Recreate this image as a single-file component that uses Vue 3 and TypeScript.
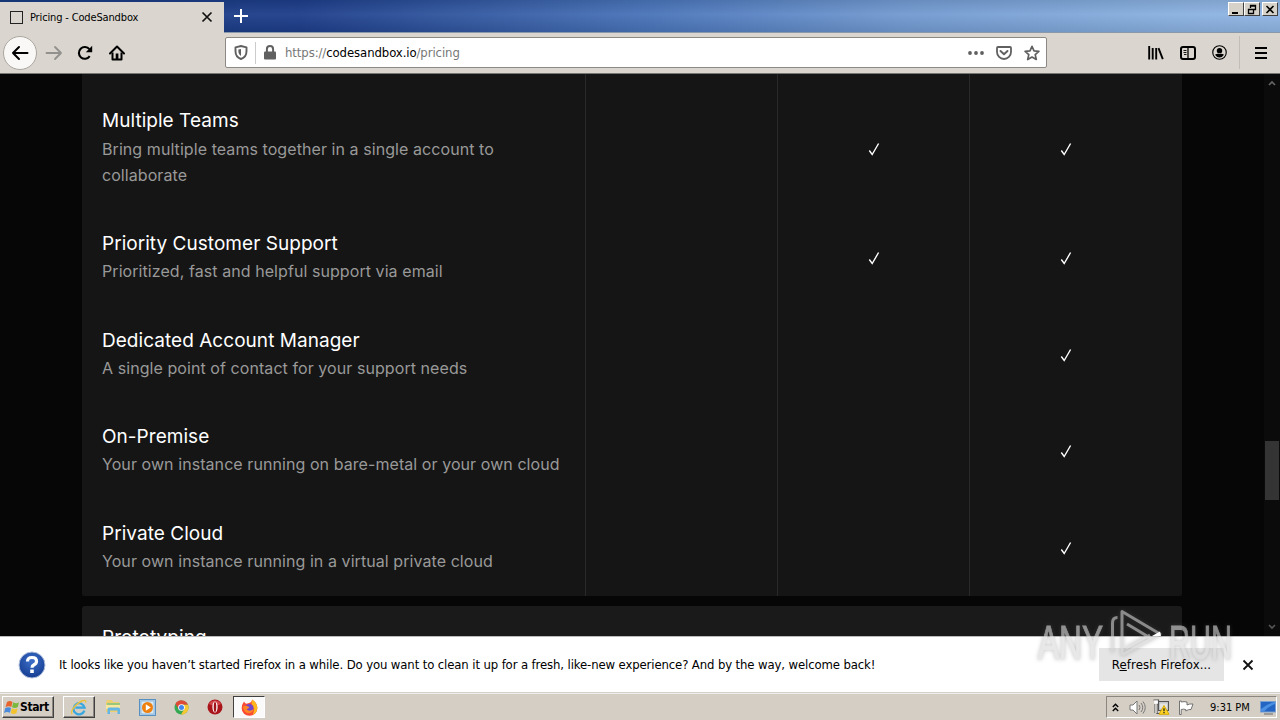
<script setup lang="ts">
interface Feature {
  title: string
  lines: string[]
  checks: boolean[]
}

const features: Feature[] = [
  {
    title: 'Multiple Teams',
    lines: ['Bring multiple teams together in a single account to', 'collaborate'],
    checks: [false, true, true],
  },
  {
    title: 'Priority Customer Support',
    lines: ['Prioritized, fast and helpful support via email'],
    checks: [false, true, true],
  },
  {
    title: 'Dedicated Account Manager',
    lines: ['A single point of contact for your support needs'],
    checks: [false, false, true],
  },
  {
    title: 'On-Premise',
    lines: ['Your own instance running on bare-metal or your own cloud'],
    checks: [false, false, true],
  },
  {
    title: 'Private Cloud',
    lines: ['Your own instance running in a virtual private cloud'],
    checks: [false, false, true],
  },
]
</script>

<template>
  <div class="screen">
    <header class="tabstrip">
      <div class="tab">
        <span class="favicon"></span>
        <span class="tab-title">Pricing - CodeSandbox</span>
        <svg class="tab-close" width="12" height="12" viewBox="0 0 12 12"><path d="M1.5 1.5l9 9M10.5 1.5l-9 9" stroke="#111" stroke-width="1.7" /></svg>
      </div>
      <svg class="newtab" width="16" height="16" viewBox="0 0 16 16"><path d="M8 1v14M1 8h14" stroke="#fff" stroke-width="2" /></svg>
      <div class="winbtns">
        <span class="winbtn"><svg width="12" height="11" viewBox="0 0 12 11"><path d="M2 9h6" stroke="#000" stroke-width="2" /></svg></span>
        <span class="winbtn"><svg width="12" height="11" viewBox="0 0 12 11"><path d="M4.5 4V1.5h5v4H8M4 2h6M2.5 5.500h5v4h-5zM2 5.500h6" fill="none" stroke="#000" stroke-width="1.3" /></svg></span>
        <span class="winbtn last"><svg width="12" height="11" viewBox="0 0 12 11"><path d="M2.500 2l7 7M9.500 2l-7 7" stroke="#000" stroke-width="1.6" /></svg></span>
      </div>
    </header>

    <nav class="toolbar">
      <div class="back"><svg width="18" height="16" viewBox="0 0 18 16"><path d="M16.500 8H2M8 2L2 8l6 6" fill="none" stroke="#000" stroke-width="2" stroke-linecap="round" stroke-linejoin="round" /></svg></div>
      <svg class="fwd" width="18" height="16" viewBox="0 0 18 16"><path d="M1.500 8H16M10 2l6 6-6 6" fill="none" stroke="#92918d" stroke-width="1.800" stroke-linecap="round" stroke-linejoin="round" /></svg>
      <svg class="reload" width="16" height="16" viewBox="0 0 16 16"><path d="M12.700 11.200A5.900 5.900 0 1 1 12.400 4.200" fill="none" stroke="#000" stroke-width="2.100" /><path d="M15.200 .8v6.400H8.800z" fill="#000" /></svg>
      <svg class="home" width="16" height="16" viewBox="0 0 16 16"><path d="M1 8.500L8 1.500l7 7" fill="none" stroke="#000" stroke-width="2" stroke-linecap="round" stroke-linejoin="round" /><path d="M3.500 7.500V14.500h9V7.500" fill="none" stroke="#000" stroke-width="2" stroke-linejoin="round" /><path d="M6.700 8.500h2.700V14H6.700z" fill="#000" /></svg>
      <div class="urlbar">
        <svg class="shield" width="14" height="15" viewBox="0 0 14 15"><path d="M7 1l5.500 1.300v4C12.500 10 10.500 12.800 7 14 3.500 12.800 1.500 10 1.500 6.300v-4z" fill="none" stroke="#606060" stroke-width="1.900" stroke-linejoin="round" /><path d="M7 4v7C5.300 10 4.400 8.500 4.400 6.300V4.500z" fill="#606060" /></svg>
        <span class="url-sep"></span>
        <svg class="lock" width="12" height="15" viewBox="0 0 12 15"><path d="M2.900 7V4.200a3.100 3.100 0 0 1 6.200 0V7" fill="none" stroke="#606060" stroke-width="2" /><rect x="0" y="6.500" width="12" height="8" rx="1" fill="#606060" /></svg>
        <span class="url">https://<b>codesandbox.io</b>/pricing</span>
        <svg class="dots" width="16" height="4" viewBox="0 0 16 4"><circle cx="2" cy="2" r="1.900" /><circle cx="8" cy="2" r="1.900" /><circle cx="14" cy="2" r="1.900" /></svg>
        <svg class="pocket" width="16" height="14" viewBox="0 0 16 14"><path d="M2 1h12q1 0 1 1v4a7 7 0 0 1-14 0V2q0-1 1-1z" fill="none" stroke="#606060" stroke-width="1.800" /><path d="M4.500 5L8 8.300 11.500 5" fill="none" stroke="#606060" stroke-width="1.900" stroke-linecap="round" stroke-linejoin="round" /></svg>
        <svg class="star" width="16" height="16" viewBox="0 0 16 16"><path d="M8 1.300l2 4.500 4.900.5-3.700 3.300 1.100 4.900L8 12l-4.300 2.500 1.100-4.900L1.100 6.300 6 5.800z" fill="none" stroke="#606060" stroke-width="1.700" stroke-linejoin="round" /></svg>
      </div>
      <svg class="library" width="16" height="16" viewBox="0 0 16 16"><path d="M1.200 1v13.500M4.700 3v11.500M8.200 3v11.500M10.500 3.200l4.300 11" stroke="#000" stroke-width="1.900" /></svg>
      <svg class="sidebar" width="16" height="14" viewBox="0 0 16 14"><rect x="1" y="1" width="14" height="12" rx="2" fill="none" stroke="#000" stroke-width="2" /><path d="M8 1v12" stroke="#000" stroke-width="1.300" /><path d="M3.500 4.500h3M3.500 6.500h3M4 8.500h2.500" stroke="#000" stroke-width=".9" /></svg>
      <svg class="account" width="15" height="15" viewBox="0 0 16 16"><circle cx="8" cy="8" r="7.200" fill="none" stroke="#000" stroke-width="1.200" /><circle cx="8" cy="6" r="2.900" /><path d="M3.200 10.300Q5.500 9 8 9.700 10.500 9 12.800 10.300 11 13.200 8 13.200T3.200 10.300z" /></svg>
      <span class="tool-sep"></span>
      <svg class="menu" width="12" height="12" viewBox="0 0 12 12"><path d="M0 1h12M0 6h12M0 11h12" stroke="#000" stroke-width="2" /></svg>
    </nav>

    <main class="page">
      <div class="content">
        <section class="table">
          <div class="row lead"><div class="cell info"></div><div class="cell"></div><div class="cell"></div><div class="cell"></div></div>
          <div v-for="f in features" :key="f.title" class="row">
            <div class="cell info">
              <h3>{{ f.title }}</h3>
              <p v-for="l in f.lines" :key="l">{{ l }}</p>
            </div>
            <div v-for="(c, i) in f.checks" :key="i" class="cell">
              <svg v-if="c" width="12" height="14" viewBox="0 0 12 14"><path d="M1.300 8.500L4.200 12.500 10.600 1.500" fill="none" stroke="#fff" stroke-width="1.400" /></svg>
            </div>
          </div>
        </section>
        <section class="next"><h3>Prototyping</h3></section>
      </div>
      <div class="scrollbar">
        <svg width="8" height="6" viewBox="0 0 8 6"><path d="M1 5l3-3 3 3" fill="none" stroke="#666" stroke-width="1.700" /></svg>
        <span class="thumb"></span>
        <svg class="down" width="8" height="6" viewBox="0 0 8 6"><path d="M1 1l3 3 3-3" fill="none" stroke="#555" stroke-width="1.700" /></svg>
      </div>
    </main>

    <aside class="notice">
      <svg class="help" width="28" height="28" viewBox="0 0 28 28">
        <defs><radialGradient id="hg" cx=".5" cy=".35" r=".65"><stop offset="0" stop-color="#3d70ca" /><stop offset="1" stop-color="#153d91" /></radialGradient></defs>
        <circle cx="14" cy="14" r="13" fill="url(#hg)" stroke="#aebddb" stroke-width="1" />
        <path d="M9.500 10.500Q9.500 6.500 14 6.500T18.500 10.200Q18.500 12.500 16 13.700 14 14.700 14 16.700" fill="none" stroke="#fff" stroke-width="3.200" /><rect x="12.200" y="18.500" width="3.600" height="3.500" fill="#fff" />
      </svg>
      <span class="msg">It looks like you haven’t started Firefox in a while. Do you want to clean it up for a fresh, like-new experience? And by the way, welcome back!</span>
      <button class="refresh">R<u>e</u>fresh Firefox...</button>
      <svg class="dismiss" width="12" height="12" viewBox="0 0 12 12"><path d="M1.500 1.500l9 9M10.500 1.500l-9 9" stroke="#111" stroke-width="1.800" /></svg>
    </aside>

    <footer class="taskbar">
      <div class="start">
        <svg width="16" height="15" viewBox="0 0 16 15"><path d="M3 2q3-2 5.500 0L7.300 7Q5 5.500 1.500 7z" fill="#e5652d" /><path d="M9.300 2.300q3 2 5.700 0L13.800 7Q11 9 8 7.300z" fill="#7bb83e" /><path d="M1.300 8Q4.500 6.500 7 8L6 12.800Q3 11 0 13z" fill="#4a8cdb" /><path d="M7.900 8.300q3 1.800 5.700 0l-1.200 5Q9.500 15 6.700 13z" fill="#f2c32f" /></svg>
        <b>Start</b>
      </div>
      <div class="task raised">
        <svg width="18" height="17" viewBox="0 0 20 18"><path d="M16 12.500A6.200 6.200 0 1 1 16.200 9.200H6" fill="none" stroke="#38a6df" stroke-width="2.500" /><path d="M2.500 16.500C-1 14 7 4 14 1.500q4-1.500 3.500 2" fill="none" stroke="#ebc23d" stroke-width="1.500" /></svg>
      </div>
      <div class="task">
        <svg width="17" height="16" viewBox="0 0 17 16"><path d="M1 3l1-2h5l1 2h6v10H1z" fill="#edcf72" /><path d="M2 4h13v3H2z" fill="#99c77e" /><path d="M1 6h14v4H1z" fill="#f9e7a0" /><path d="M2.500 15V10q0-1.500 1.500-1.500h9.500Q15 8.500 15 10v5h-2.500v-3.500H5V15z" fill="#64b6e4" /></svg>
      </div>
      <div class="task">
        <svg width="17" height="17" viewBox="0 0 17 17"><rect x=".5" y=".5" width="16" height="16" fill="#b8d4ec" stroke="#5790c0" /><rect x="2" y="2" width="13" height="13" fill="#d9e9f5" stroke="#79a9cf" stroke-width=".7" /><circle cx="8.500" cy="8.500" r="5.500" fill="#ee8010" /><path d="M6.800 5.300l5 3.200-5 3.200z" fill="#fff" /></svg>
      </div>
      <div class="task">
        <svg width="15" height="15" viewBox="0 0 15 15"><circle cx="7.500" cy="7.500" r="7" fill="#36a852" /><path d="M1.400 4A7 7 0 0 1 14 4.700H7.500L4.700 9z" fill="#df4937" /><path d="M14 4.700A7 7 0 0 1 7 14.500L10.300 9 7.500 4.700z" fill="#f5c732" /><circle cx="7.500" cy="7.500" r="3.300" fill="#fff" /><circle cx="7.500" cy="7.500" r="2.500" fill="#4385ef" /></svg>
      </div>
      <div class="task">
        <svg width="16" height="16" viewBox="0 0 16 16"><circle cx="8" cy="8" r="7.500" fill="#aa151b" /><path d="M2 5a7 7 0 0 1 12 0Q8 8 2 5z" fill="#d3484c" /><ellipse cx="8" cy="8" rx="2.600" ry="5.600" fill="#fff" /><ellipse cx="8" cy="8" rx="1.300" ry="5" fill="#a21219" /></svg>
      </div>
      <div class="task pressed">
        <svg width="17" height="17" viewBox="0 0 17 17"><path d="M8 4Q11 3 11 .5 16.500 4 16.300 9.500A7.800 7.300 0 0 1 .7 9.500Q.5 6 3 2.500q.7 2 2.500 2.200z" fill="#fb4a34" /><path d="M11 .5Q16.500 4 16.300 9.500 16 14 11.500 16 15 9 10.500 5z" fill="#ffb71c" /><circle cx="8.300" cy="9.300" r="4.200" fill="#7147ce" /><path d="M2 7.500Q6 5.500 8.500 8.500L5.500 10.500Q9 13 12.500 10 11.500 14.500 7 14.300 2.500 13 2 7.500z" fill="#ff8524" /></svg>
      </div>

      <div class="tray">
        <svg class="chev" width="7" height="9" viewBox="0 0 7 9"><path d="M.8 4l2.700-2.700L6.200 4M.8 8l2.700-2.700L6.200 8" fill="none" stroke="#000" stroke-width="1.400" /></svg>
        <svg class="sound" width="17" height="15" viewBox="0 0 17 15"><path d="M1 5h3l4-4v13l-4-4H1z" fill="#fff" stroke="#777" /><path d="M10 5q2 2.500 0 5M12 3q3.500 4.500 0 9M14 1.500q4.500 6 0 12" fill="none" stroke="#777" /></svg>
        <svg class="net" width="17" height="16" viewBox="0 0 17 16"><rect x="5.500" y="2.500" width="10" height="9" fill="#c3c7c9" stroke="#555" /><path d="M7 4.500h7v5H7z" fill="#e4e4e0" /><path d="M.5 1h5v4H4v9.500h5" fill="none" stroke="#555" stroke-width="1.200" /><path d="M1.200 1.500h3.600v3.300H1.200z" fill="#fff" /><path d="M2 5v9" stroke="#555" /><path d="M3 5v9" stroke="#fff" /><path d="M11 6.500l5 8.800H6z" fill="#ffd425" stroke="#d8a900" stroke-linejoin="round" /><path d="M11 9.200v3M11 13v1.300" stroke="#222" stroke-width="1.300" /></svg>
        <svg class="flag" width="16" height="15" viewBox="0 0 16 15"><path d="M1.500 1v13.500h1.700V9.500q2.500-.7 4.600 0V11q3-2 5.200-1.500L15 4Q11.500 3.500 9 5V2q-3-.7-5.800 0V1z" fill="#fff" stroke="#666" stroke-width=".9" /></svg>
        <span class="clock">9:31 PM</span>
        <svg class="desktop" width="16" height="15" viewBox="0 0 16 15"><rect x=".5" y="1.500" width="15" height="10.500" fill="#2464c2" stroke="#7a9fd0" /><path d="M1 9Q8 3 15 2v2Q9 6 4 11.500H1z" fill="#4b90e2" /><path d="M4 14h9" stroke="#777" stroke-width="1.200" /></svg>
      </div>
    </footer>

    <svg class="watermark" width="210" height="70" viewBox="1030 602 210 70">
      <g class="mark">
        <text x="1038" y="659" textLength="65" lengthAdjust="spacingAndGlyphs">ANY</text>
        <text x="1169" y="659" textLength="63" lengthAdjust="spacingAndGlyphs">RUN</text>
        <path d="M1112.500 652V623q0-5.500 5-5.500M1122 655V611.500L1160 634 1122 655M1127 624L1152 639M1126 648l24-13" fill="none" stroke="#cfcfcf" stroke-width="3" stroke-linejoin="round" />
      </g>
      <path d="M1152 636l8-4.500 1 4.500z" fill="#fff" />
    </svg>
  </div>
</template>

<style>
html, body { margin: 0; overflow: hidden; }
</style>

<style scoped>
* { box-sizing: border-box; }
.screen { position: relative; width: 1280px; height: 720px; overflow: hidden; display: flex; flex-direction: column; font: 12px "DejaVu Sans Condensed", "DejaVu Sans", sans-serif; color: #000; }
svg { display: block; flex: none; }
.tabstrip { height: 33px; flex: none; display: flex; align-items: flex-start; background: linear-gradient(180deg, rgba(0,0,0,.09), rgba(255,255,255,.05) 45%, rgba(0,0,0,.09)), linear-gradient(90deg, #173a80 0, #1d3d89 300px, #4974b9 650px, #7199d0 900px, #8bb2e0 1200px, #8fb5e3); border-bottom: 1px solid #8998aa; }
.tab { width: 224px; height: 33px; margin-top: 2px; background: #dad6cf; display: flex; align-items: center; padding: 0 11px 3px 10px; }
.favicon { width: 13px; height: 13px; border: 1.500px solid #222; outline: .5px solid #222; outline-offset: -1.500px; }
.tab-title { margin-left: 7px; font-size: 11px; letter-spacing: -.15px; white-space: nowrap; }
.tab-close { margin-left: auto; }
.newtab { margin: 8px 0 0 9px; }
.winbtns { margin: 2px 2px 0 auto; display: flex; }
.winbtn { width: 16px; height: 14px; background: #d6d2c9; border: 1px solid; border-color: #fff #404040 #404040 #fff; display: flex; justify-content: center; align-items: center; }
.winbtn.last { margin-left: 2px; }
.toolbar { height: 41px; flex: none; background: #dad6cf; border-bottom: 1px solid #777; display: flex; align-items: center; padding: 0 13px 1px 3px; }
.back { width: 34px; height: 34px; border: 1px solid #aaa69f; border-radius: 50%; background: #f9f8f6; display: flex; align-items: center; justify-content: center; }
.fwd { margin-left: 8px; }
.reload { margin-left: 14px; }
.home { margin-left: 16px; }
.urlbar { width: 822px; height: 31px; margin-left: 100px; background: #fff; border: 1px solid #8b8984; border-radius: 2px; display: flex; align-items: center; padding: 0 6px 0 8px; }
.url-sep { width: 1px; height: 22px; background: #ccc; margin: 0 8px 0 7px; }
.url { margin-left: 9px; font-size: 13px; color: #777; letter-spacing: -.09px; white-space: nowrap; }
.url b { font-weight: 400; color: #000; }
.dots { margin-left: auto; fill: #606060; }
.pocket { margin-left: 12px; }
.star { margin-left: 12px; }
.library { margin-left: 101px; }
.sidebar { margin-left: 16px; }
.account { margin-left: 16px; }
.tool-sep { height: 33px; width: 1px; background: #c2beb7; margin-left: auto; }
.menu { margin: 0 0 0 15px; }
.page { height: 562px; flex: none; background: #060606; display: flex; overflow: hidden; font-family: Inter, sans-serif; }
.content { width: 1100px; margin-left: 82px; }
.table { background: #151515; border-radius: 0 0 2px 2px; height: 522px; overflow: hidden; }
.row { display: grid; grid-template-columns: 503px 192px 192px 213px; }
.lead { height: 13.400px; }
.cell { display: flex; align-items: center; justify-content: center; border-left: 1px solid #292929; min-height: 0; }
.cell:last-child { padding-right: 20px; }
.cell.info { display: block; padding: 21px 0 21.500px 20px; border: 0; margin-right: 1px; }
.lead .info { padding: 0; }
h3 { margin: 0 0 2.500px; font-size: 19px; line-height: 25.700px; font-weight: 400; color: #fff; letter-spacing: .04px; white-space: nowrap; }
p { margin: 0; font-size: 16px; line-height: 25.900px; color: #999; letter-spacing: .07px; white-space: nowrap; }
.next { margin-top: 10px; padding: 19px 20px; height: 100px; background: #1a1a1a; border-radius: 3px; }
.scrollbar { margin-left: auto; width: 16px; background: #0b0b0b; display: flex; flex-direction: column; align-items: center; padding: 6px 0; }
.thumb { width: 14px; height: 59px; background: #343434; margin-top: 355px; }
.down { margin-top: auto; }
.notice { height: 57px; flex: none; background: #fff; border-top: 1px solid #bbb; border-bottom: 1px solid #d6d2c9; display: flex; align-items: center; padding: 0 26px 0 18px; }
.msg { margin-left: 13px; font-size: 13px; white-space: nowrap; letter-spacing: -.12px; }
.refresh { margin: 0 18px 0 auto; width: 125px; height: 33px; padding: 0; border: 0; background: #e5e5e5; font: 13px "DejaVu Sans Condensed", sans-serif; letter-spacing: .1px; color: #000; }
.taskbar { flex: 1; background: #d5cec5; border-top: 1px solid #eee; display: flex; align-items: center; padding: 0 3px 0 2px; }
.start { width: 52px; height: 22px; display: flex; align-items: center; padding-left: 1px; border: 1px solid; border-color: #fff #404040 #404040 #fff; box-shadow: inset -1px -1px #8b8780; font-size: 12px; letter-spacing: -.4px; margin-right: 9px; }
.task { width: 32px; height: 22px; display: flex; align-items: center; justify-content: center; margin-right: 2px; }
.raised { border: 1px solid; border-color: #fff #404040 #404040 #fff; box-shadow: inset -1px -1px #8b8780; }
.pressed { background: #fafafa; border: 1px solid; border-color: #404040 #fff #fff #404040; }
.tray { margin-left: auto; width: 171px; height: 22px; border: 1px solid; border-color: #8b8780 #fff #fff #8b8780; display: flex; align-items: center; padding: 0 0 0 5px; font-size: 11px; }
.sound { margin-left: 10px; }
.net { margin-left: 7px; }
.flag { margin-left: 8px; }
.clock { margin-left: 16px; white-space: nowrap; }
.desktop { margin-left: auto; }
.watermark { position: absolute; left: 1030px; top: 602px; pointer-events: none; }
.mark { opacity: .62; filter: drop-shadow(0 0 2px rgba(90,90,90,.6)); }
.mark text { font: 400 49px "Liberation Sans", sans-serif; fill: #dadada; stroke: #dadada; stroke-width: 1px; }
</style>
